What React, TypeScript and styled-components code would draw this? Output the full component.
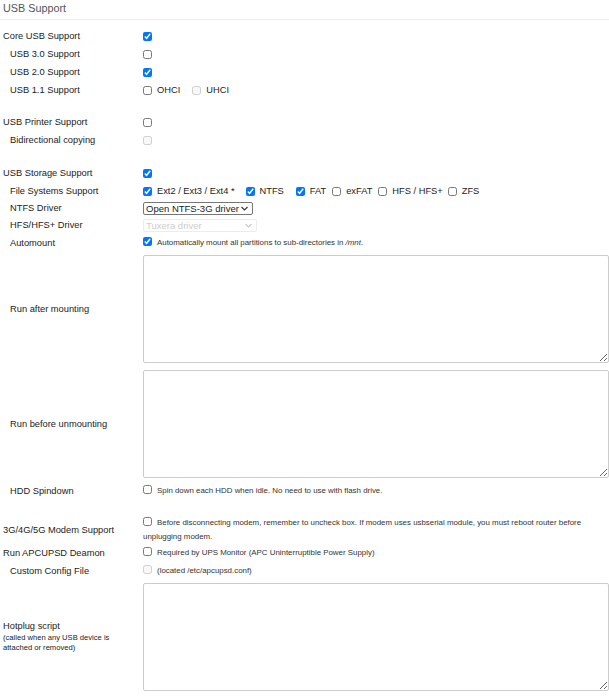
import React from "react";
import styled, { createGlobalStyle } from "styled-components";

const GlobalStyle = createGlobalStyle`
  html, body {
    margin: 0;
    padding: 0;
    background: #fff;
    overflow: hidden;
  }
  body {
    font-family: "Liberation Sans", Arial, sans-serif;
    color: #222;
  }
`;

const Page = styled.div`
  width: 609px;
`;

const Heading = styled.h2`
  margin: 0 0 7px;
  padding-left: 3px;
  height: 19px;
  line-height: 17px;
  font-size: 10.8px;
  font-weight: normal;
  color: #555;
  border-bottom: 1px solid #eee;
`;

const Row = styled.div<{ $top?: number }>`
  display: grid;
  grid-template-columns: 143px 1fr;
  align-items: center;
  min-height: 18px;
  margin-top: ${(p) => p.$top ?? 0}px;
`;

const TextRow = styled(Row)`
  padding: 3px 0 4px;
`;

const Label = styled.div<{ $indent?: boolean }>`
  padding-left: ${(p) => (p.$indent ? 10 : 3)}px;
  padding-right: 20px;
  font-size: 9.3px;
  color: #222;
`;

const SubLabel = styled.div`
  margin-top: 2px;
  font-size: 7.6px;
  line-height: 10px;
`;

const Value = styled.div`
  display: flex;
  align-items: center;
  font-size: 9.3px;
`;

const Check = styled.input.attrs({ type: "checkbox" })`
  width: 9px;
  height: 9px;
  margin: 0 5px 0 0;
  accent-color: #0075ff;
  vertical-align: -1px;
`;

const Option = styled.label<{ $gap?: number }>`
  display: inline-flex;
  align-items: center;
  margin-right: ${(p) => p.$gap ?? 6}px;
`;

const Note = styled.div`
  font-size: 7.9px;
  line-height: 14px;
  color: #333;
`;

const SelectWrap = styled.div`
  position: relative;
  display: inline-block;
`;

const Select = styled.select<{ $w: number }>`
  display: block;
  box-sizing: border-box;
  appearance: none;
  width: ${(p) => p.$w}px;
  height: 13px;
  padding: 0 12px 0 2px;
  font-family: inherit;
  font-size: 9.5px;
  line-height: 11px;
  color: #222;
  background: #fff;
  border: 1px solid #767676;
  border-radius: 2px;

  &:disabled {
    color: #b8b8b8;
    border-color: #e4e4e4;
  }
`;

const Chevron = styled.svg<{ $muted?: boolean }>`
  position: absolute;
  right: 5px;
  top: 4px;
  width: 7px;
  height: 5px;
  fill: none;
  stroke: ${(p) => (p.$muted ? "#c8c8c8" : "#333")};
  stroke-width: 1.1;
  pointer-events: none;
`;

const Textarea = styled.textarea`
  display: block;
  box-sizing: border-box;
  width: 466px;
  height: 108px;
  border: 1px solid #ccc;
  border-radius: 2px;
  resize: vertical;
`;

function DropDown({
  width,
  disabled,
  options,
}: {
  width: number;
  disabled?: boolean;
  options: string[];
}) {
  return (
    <SelectWrap>
      <Select $w={width} disabled={disabled} defaultValue={options[0]}>
        {options.map((o) => (
          <option key={o} value={o}>
            {o}
          </option>
        ))}
      </Select>
      <Chevron $muted={disabled} viewBox="0 0 7 5">
        <path d="M0.5 1 L3.5 4 L6.5 1" />
      </Chevron>
    </SelectWrap>
  );
}

export default function App() {
  return (
    <Page>
      <GlobalStyle />
      <Heading>USB Support</Heading>

      <Row>
        <Label>Core USB Support</Label>
        <Value>
          <Check defaultChecked />
        </Value>
      </Row>
      <Row>
        <Label $indent>USB 3.0 Support</Label>
        <Value>
          <Check />
        </Value>
      </Row>
      <Row>
        <Label $indent>USB 2.0 Support</Label>
        <Value>
          <Check defaultChecked />
        </Value>
      </Row>
      <Row>
        <Label $indent>USB 1.1 Support</Label>
        <Value>
          <Option $gap={12}>
            <Check />
            OHCI
          </Option>
          <Option>
            <Check disabled />
            UHCI
          </Option>
        </Value>
      </Row>

      <Row $top={14}>
        <Label>USB Printer Support</Label>
        <Value>
          <Check />
        </Value>
      </Row>
      <Row>
        <Label $indent>Bidirectional copying</Label>
        <Value>
          <Check disabled />
        </Value>
      </Row>

      <Row $top={15}>
        <Label>USB Storage Support</Label>
        <Value>
          <Check defaultChecked />
        </Value>
      </Row>
      <Row>
        <Label $indent>File Systems Support</Label>
        <Value>
          <Option $gap={11}>
            <Check defaultChecked />
            Ext2 / Ext3 / Ext4 *
          </Option>
          <Option $gap={12}>
            <Check defaultChecked />
            NTFS
          </Option>
          <Option>
            <Check defaultChecked />
            FAT
          </Option>
          <Option>
            <Check />
            exFAT
          </Option>
          <Option $gap={5}>
            <Check />
            HFS / HFS+
          </Option>
          <Option>
            <Check />
            ZFS
          </Option>
        </Value>
      </Row>
      <Row $top={-1}>
        <Label $indent>NTFS Driver</Label>
        <Value>
          <DropDown width={110} options={["Open NTFS-3G driver", "Tuxera driver"]} />
        </Value>
      </Row>
      <Row $top={-1}>
        <Label $indent>HFS/HFS+ Driver</Label>
        <Value>
          <DropDown width={114} disabled options={["Tuxera driver"]} />
        </Value>
      </Row>
      <Row>
        <Label $indent>Automount</Label>
        <Value>
          <Note>
            <Check defaultChecked />
            Automatically mount all partitions to sub-directories in <i>/mnt</i>.
          </Note>
        </Value>
      </Row>
      <TextRow>
        <Label $indent>Run after mounting</Label>
        <Textarea />
      </TextRow>
      <TextRow>
        <Label $indent>Run before unmounting</Label>
        <Textarea />
      </TextRow>
      <Row>
        <Label $indent>HDD Spindown</Label>
        <Value>
          <Note>
            <Check />
            Spin down each HDD when idle. No need to use with flash drive.
          </Note>
        </Value>
      </Row>

      <Row $top={16}>
        <Label>3G/4G/5G Modem Support</Label>
        <Note>
          <Check />
          Before disconnecting modem, remember to uncheck box. If modem uses
          usbserial module, you must reboot router before unplugging modem.
        </Note>
      </Row>
      <Row>
        <Label>Run APCUPSD Deamon</Label>
        <Value>
          <Note>
            <Check />
            Required by UPS Monitor (APC Uninterruptible Power Supply)
          </Note>
        </Value>
      </Row>
      <Row>
        <Label $indent>Custom Config File</Label>
        <Value>
          <Note>
            <Check disabled />
            (located /etc/apcupsd.conf)
          </Note>
        </Value>
      </Row>
      <TextRow>
        <Label>
          Hotplug script
          <SubLabel>(called when any USB device is attached or removed)</SubLabel>
        </Label>
        <Textarea />
      </TextRow>
    </Page>
  );
}
